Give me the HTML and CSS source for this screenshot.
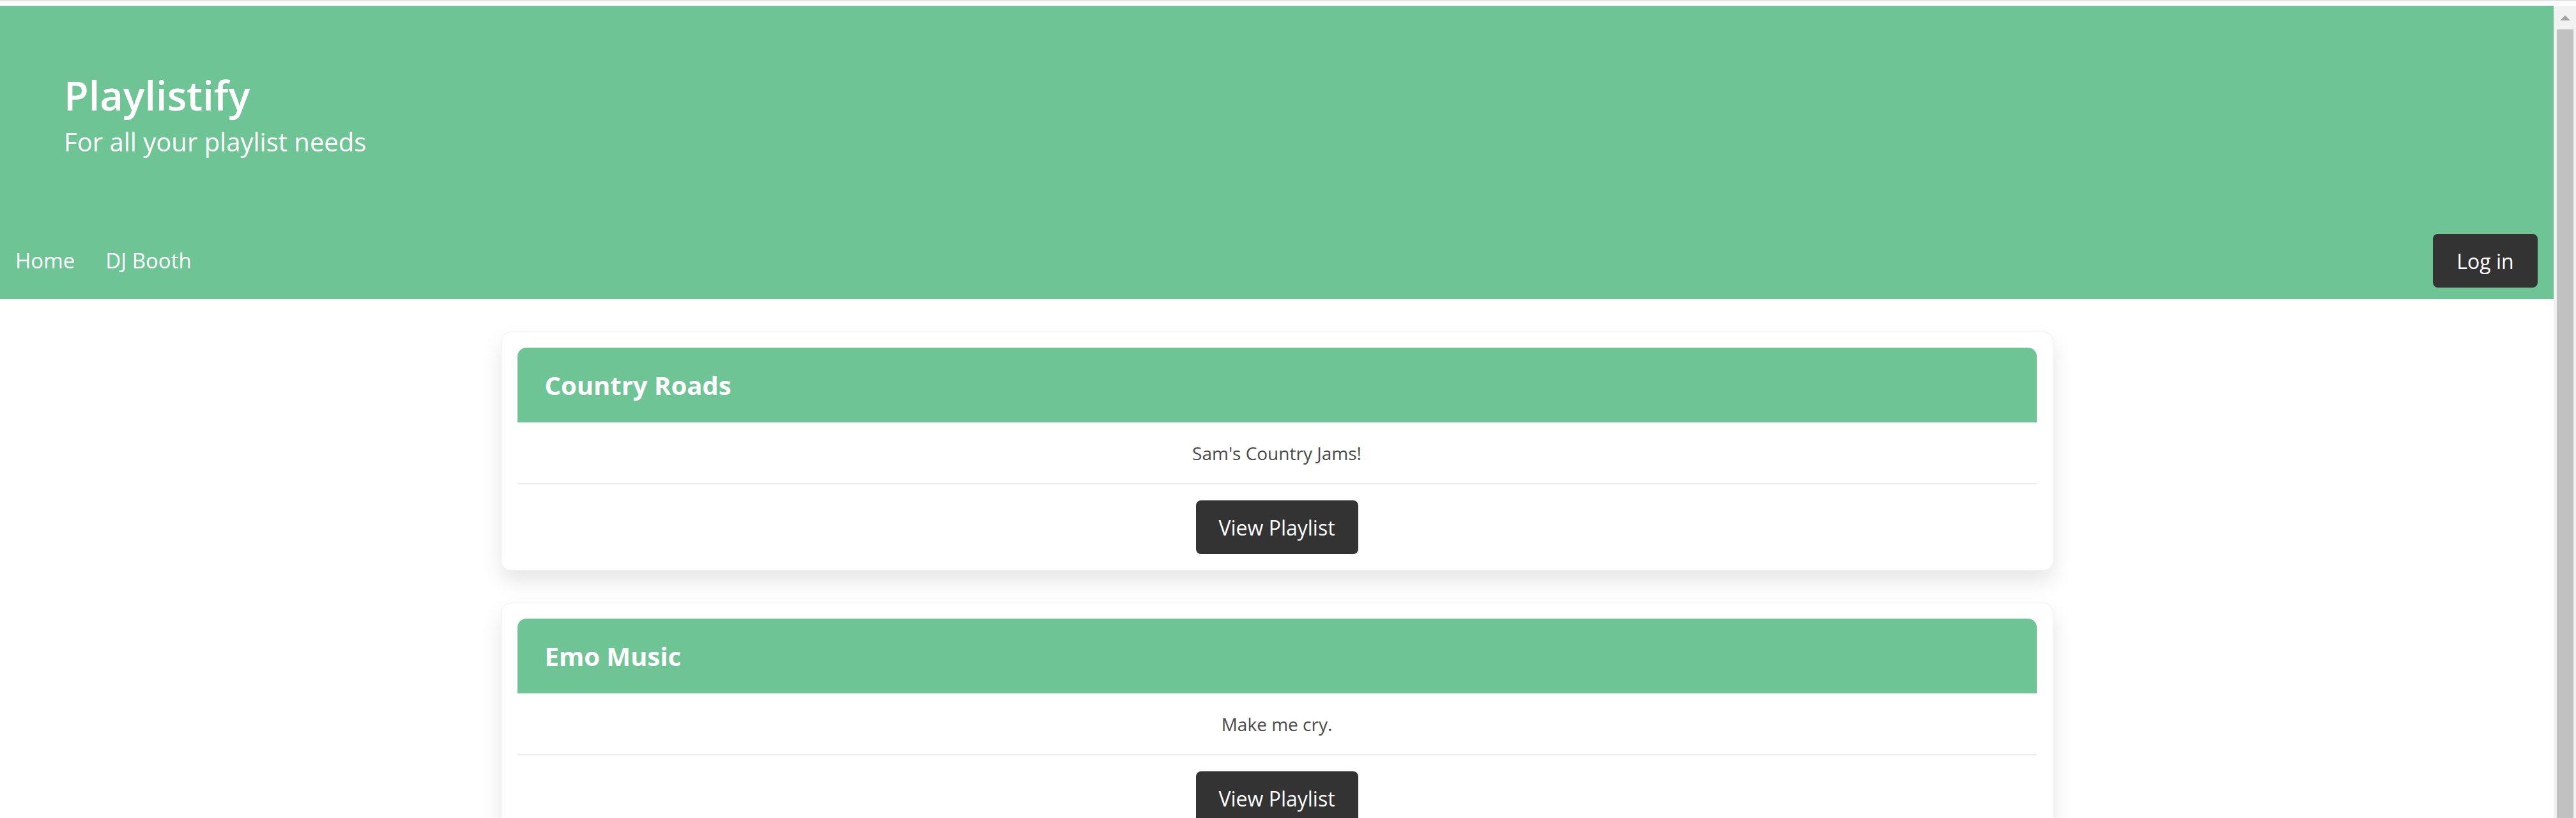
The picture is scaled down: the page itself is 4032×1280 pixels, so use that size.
FILE: index.html
```html
<!DOCTYPE html>
<html lang="en">
<head>
<meta charset="utf-8">
<title>Playlistify</title>
<link rel="stylesheet" href="styles.css">
</head>
<body>
<div class="topline"></div>
<div class="viewport">
  <div class="page">
    <header class="jumbo">
      <div class="brand">
        <h1 class="title">Playlistify</h1>
        <p class="tagline">For all your playlist needs</p>
      </div>
      <nav class="navbar">
        <div class="links">
          <a class="nav-link" href="#">Home</a>
          <a class="nav-link" href="#">DJ Booth</a>
        </div>
        <button class="btn btn-login" type="button">Log in</button>
      </nav>
    </header>
    <main class="list">
      <section class="card">
        <div class="card-head">Country Roads</div>
        <div class="card-desc">Sam's Country Jams!</div>
        <div class="card-foot"><button class="btn btn-view" type="button">View Playlist</button></div>
      </section>
      <section class="card">
        <div class="card-head">Emo Music</div>
        <div class="card-desc">Make me cry.</div>
        <div class="card-foot"><button class="btn btn-view" type="button">View Playlist</button></div>
      </section>
    </main>
  </div>
  <div class="scrollbar">
    <div class="sb-up"></div>
    <div class="sb-thumb"></div>
  </div>
</div>
</body>
</html>
```

FILE: styles.css
```css
html, body {
  margin: 0;
  height: 100%;
  overflow: hidden;
  background: #ffffff;
}

body {
  font-family: "Open Sans", "Noto Sans", sans-serif;
}

.topline {
  height: 9px;
  box-sizing: border-box;
  border-top: 2px solid #e4e4e4;
  background: #ffffff;
}

.viewport {
  display: flex;
  height: calc(100vh - 9px);
}

.page {
  flex: 1;
  min-width: 0;
  overflow: hidden;
}

.scrollbar {
  width: 35px;
  background: #f1f1f1;
  display: flex;
  flex-direction: column;
  align-items: center;
}

.sb-up {
  width: 0;
  height: 0;
  border-left: 8px solid transparent;
  border-right: 8px solid transparent;
  border-bottom: 8px solid #a3a3a3;
  margin-top: 15px;
}

.sb-thumb {
  width: 26px;
  flex: 1;
  margin-top: 14px;
  background: #c1c1c1;
}

.jumbo {
  height: 459px;
  background: #6ec494;
  color: #ffffff;
  display: flex;
  flex-direction: column;
  justify-content: space-between;
}

.brand {
  padding: 102px 0 0 100px;
}

.title {
  margin: 0;
  font-size: 63px;
  font-weight: 600;
  line-height: 1.2;
}

.tagline {
  margin: 11px 0 0;
  font-size: 40px;
  line-height: 1.2;
}

.navbar {
  display: flex;
  align-items: center;
  justify-content: space-between;
  padding: 0 25px 18px 0;
}

.links {
  display: flex;
}

.nav-link {
  color: #ffffff;
  text-decoration: none;
  font-size: 33px;
  line-height: 1.5;
  padding: 0 24px;
}

.btn {
  font-family: inherit;
  color: #ffffff;
  background: #333333;
  border: 0;
  border-radius: 8px;
  font-size: 32px;
  padding: 0;
  height: 84px;
}

.btn-login {
  width: 164px;
}

.btn-view {
  width: 254px;
}

.list {
  width: 2430px;
  margin: 51px auto 0;
  display: flex;
  flex-direction: column;
  gap: 50px;
}

.card {
  box-sizing: border-box;
  background: #ffffff;
  border: 1px solid #eeeeee;
  border-radius: 15px;
  padding: 24px 25px 25px;
  box-shadow: 0 16px 33px rgba(0, 0, 0, 0.1);
}

.card-head {
  height: 117px;
  background: #6ec494;
  border-radius: 14px 14px 0 0;
  display: flex;
  align-items: center;
  padding-left: 43px;
  font-size: 40px;
  font-weight: 700;
  color: #ffffff;
}

.card-desc {
  box-sizing: border-box;
  height: 97px;
  display: flex;
  align-items: center;
  justify-content: center;
  border-bottom: 2px solid #ebebeb;
  font-size: 28px;
  color: #4a4a4a;
}

.card-foot {
  padding-top: 25px;
  display: flex;
  justify-content: center;
}
```
